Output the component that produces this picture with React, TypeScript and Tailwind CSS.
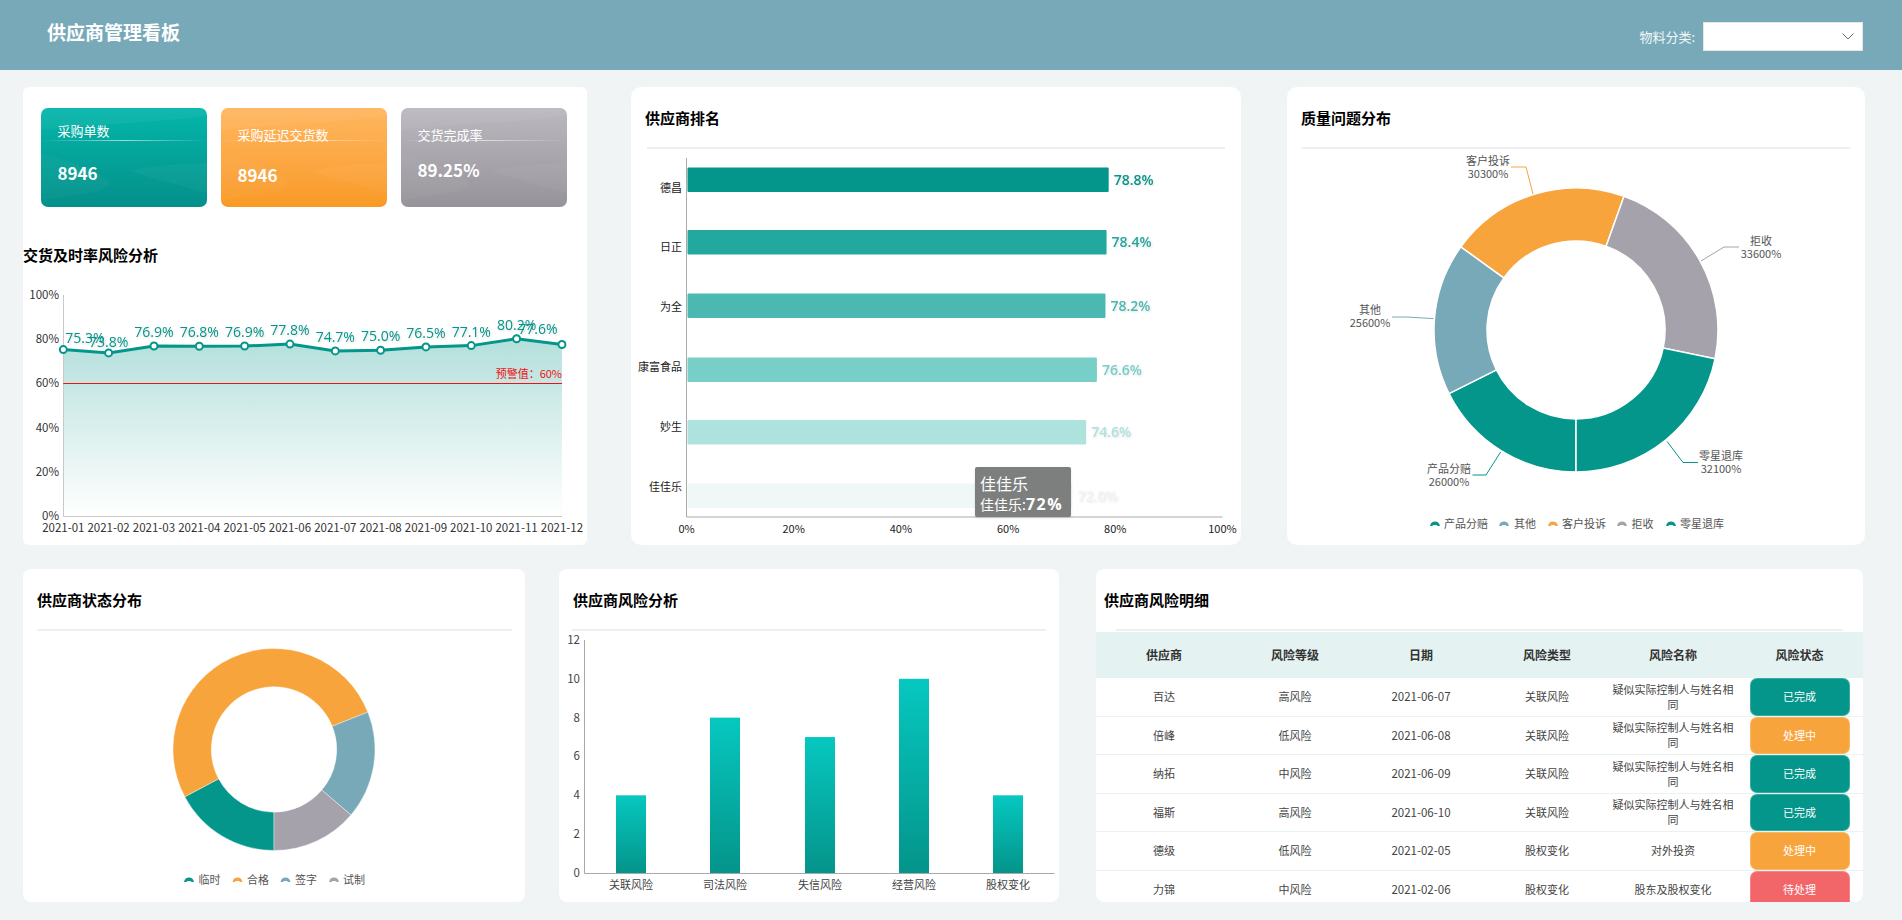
import React from "react";

const TEAL = "#04968a";
const ORANGE = "#f8a43c";
const BLUE = "#78a9b8";
const GRAY = "#a5a2ab";

function polar(cx: number, cy: number, r: number, deg: number) {
  const a = (deg * Math.PI) / 180;
  return [cx + r * Math.sin(a), cy - r * Math.cos(a)];
}

function arc(cx: number, cy: number, R: number, r: number, a0: number, a1: number) {
  const [x0, y0] = polar(cx, cy, R, a0);
  const [x1, y1] = polar(cx, cy, R, a1);
  const [x2, y2] = polar(cx, cy, r, a1);
  const [x3, y3] = polar(cx, cy, r, a0);
  const large = a1 - a0 > 180 ? 1 : 0;
  return `M${x0} ${y0}A${R} ${R} 0 ${large} 1 ${x1} ${y1}L${x2} ${y2}A${r} ${r} 0 ${large} 0 ${x3} ${y3}Z`;
}

function Donut({ cx, cy, R, r, items, stroke }: { cx: number; cy: number; R: number; r: number; items: { v: number; c: string }[]; stroke: number }) {
  const total = items.reduce((s, i) => s + i.v, 0);
  let a = 180;
  return (
    <g>
      {items.map((it, i) => {
        const next = a + (it.v / total) * 360;
        const d = arc(cx, cy, R, r, a, next);
        a = next;
        return <path key={i} d={d} fill={it.c} stroke="#fff" strokeWidth={stroke} />;
      })}
    </g>
  );
}

function LegendMark({ x, y, c }: { x: number; y: number; c: string }) {
  return <path transform={`translate(${x} ${y})`} d="M0 5C.6 2 2.6 .6 5 .6S9.4 2 10 5H7.600C7 3.600 3 3.600 2.400 5Z" fill={c} />;
}

function CardHead({ title, className = "" }: { title: string; className?: string }) {
  return <h2 className={`text-[15px] leading-[20px] font-bold text-black ${className}`}>{title}</h2>;
}

function Kpi({ title, value, grad, titleTop, valueTop }: { title: string; value: string; grad: string; titleTop: string; valueTop: string }) {
  return (
    <div className={`relative h-[99px] w-[166px] overflow-hidden rounded-[7px] text-white ${grad}`}>
      <svg className="absolute inset-0" width="166" height="99" viewBox="0 0 166 99">
        <path d="M0 22C40 17 110 15 166 8V0H0Z" fill="#fff" fillOpacity="0.05" />
        <path d="M0 46C30 53 62 64 68 75C68 85 30 88 0 92Z" fill="#fff" fillOpacity="0.03" />
        <path d="M166 55C130 56 102 59 90 63C110 70 140 78 166 85Z" fill="#fff" fillOpacity="0.035" />
      </svg>
      <div className="absolute left-0 right-0 top-[32px] h-px bg-gradient-to-r from-transparent via-white/60 to-transparent" />
      <div className={`relative pl-[16.500px] ${titleTop} text-[13px] leading-[18px]`}>{title}</div>
      <div className={`relative pl-[16.500px] ${valueTop} text-[17px] leading-[22px] font-bold`}>{value}</div>
    </div>
  );
}

const lineVals = [75.3, 73.8, 76.9, 76.8, 76.9, 77.8, 74.7, 75.0, 76.5, 77.1, 80.2, 77.6];
const lineX = (i: number) => 63.3 + i * 45.33;
const lineY = (v: number) => 516 - v * 2.21;
const OPEN = { fontFamily: "'Open Sans', sans-serif" };

function LineChart() {
  const pts = lineVals.map((v, i) => `${lineX(i)},${lineY(v)}`).join(" ");
  return (
    <svg className="block" width="564" height="275" viewBox="23 270 564 275">
      <defs>
        <linearGradient id="area" x1="0" y1="0" x2="0" y2="1">
          <stop offset="0" stopColor="#04968a" stopOpacity="0.3" />
          <stop offset="1" stopColor="#04968a" stopOpacity="0" />
        </linearGradient>
      </defs>
      <polygon points={`63.3,516 ${pts} ${lineX(11)},516`} fill="url(#area)" />
      <path d="M63.5 295V516.500H562" fill="none" stroke="#c9c9c9" />
      {[0, 20, 40, 60, 80, 100].map((v) => (
        <text key={v} x="59" y={516 - v * 2.21 + 4} textAnchor="end" fontSize="11.5" fill="#333">{v}%</text>
      ))}
      {lineVals.map((_, i) => (
        <text key={i} x={lineX(i)} y="532" textAnchor="middle" fontSize="11.5" fill="#333">{`2021-${String(i + 1).padStart(2, "0")}`}</text>
      ))}
      <line x1="63.3" x2="562" y1="383.5" y2="383.5" stroke="#f01010" />
      <text x="562" y="378" textAnchor="end" fontSize="11" fill="#f01010">预警值：60%</text>
      <polyline points={pts} fill="none" stroke={TEAL} strokeWidth="3" />
      {lineVals.map((v, i) => (
        <circle key={i} cx={lineX(i)} cy={lineY(v)} r="3.5" fill="#fff" stroke={TEAL} strokeWidth="2" />
      ))}
      <g className="[filter:drop-shadow(1px_1px_1px_rgba(0,0,0,0.15))]" style={OPEN} fontSize="14" fill={TEAL} textAnchor="middle">
        {lineVals.map((v, i) => {
          const x = i === 0 ? 85 : i === 11 ? 538 : lineX(i);
          const y = lineY(v) - (i === 0 ? 7 : i === 1 ? 6 : i === 11 ? 11 : 9);
          return <text key={i} x={x} y={y}>{v.toFixed(1)}%</text>;
        })}
      </g>
    </svg>
  );
}

const rank = [
  { n: "德昌", v: 78.8, c: "#04968a", top: 167.5, ly: 188 },
  { n: "日正", v: 78.4, c: "#22a89e", top: 230, ly: 247 },
  { n: "为全", v: 78.2, c: "#4bb9b1", top: 293.5, ly: 307 },
  { n: "康富食品", v: 76.6, c: "#78cfc8", top: 357.5, ly: 367 },
  { n: "妙生", v: 74.6, c: "#aee3dd", top: 420, ly: 427 },
  { n: "佳佳乐", v: 72.0, c: "#f0f8f7", top: 483.5, ly: 487 },
];

function RankChart() {
  return (
    <svg className="block" width="610" height="395" viewBox="631 150 610 395">
      <path d="M686.5 158V517H1222.5" fill="none" stroke="#aaa" />
      {rank.map((r) => {
        const w = r.v * 5.345;
        return (
          <g key={r.n}>
            <rect x="687.5" y={r.top} width={w} height="24.5" rx="1" fill={r.c} />
            <text x="682" y={r.ly + 4} textAnchor="end" fontSize="11" fill="#222">{r.n}</text>
            <text x={687.5 + w + 5} y={r.top + 17} style={OPEN} fontSize="14" fontWeight="600" fill={r.c} className="[filter:drop-shadow(1px_1px_1px_rgba(0,0,0,0.12))]">{r.v.toFixed(1)}%</text>
          </g>
        );
      })}
      {[0, 20, 40, 60, 80, 100].map((v) => (
        <text key={v} x={686.5 + v * 5.36} y="533" textAnchor="middle" fontSize="11" fill="#222">{v}%</text>
      ))}
    </svg>
  );
}

function QualityChart() {
  const labels = [
    { x: 1488, y1: 165, t: "客户投诉", v: "30300%", c: ORANGE, p: "1533,194 1526,167 1511,167" },
    { x: 1761, y1: 245, t: "拒收", v: "33600%", c: GRAY, p: "1701,261 1724,247 1739,247" },
    { x: 1370, y1: 314, t: "其他", v: "25600%", c: BLUE, p: "1433.6,318.6 1407,317 1392,317" },
    { x: 1721, y1: 460, t: "零星退库", v: "32100%", c: TEAL, p: "1667,441.4 1683,462.5 1698,462.5" },
    { x: 1449, y1: 473, t: "产品分赔", v: "26000%", c: TEAL, p: "1500.6,452 1486,475 1472.5,475" },
  ];
  const legend = [
    { ix: 1430, tx: 1444, t: "产品分赔", c: TEAL },
    { ix: 1499, tx: 1514, t: "其他", c: BLUE },
    { ix: 1548, tx: 1562, t: "客户投诉", c: ORANGE },
    { ix: 1617, tx: 1631.5, t: "拒收", c: GRAY },
    { ix: 1666, tx: 1680, t: "零星退库", c: TEAL },
  ];
  return (
    <svg className="block" width="578" height="395" viewBox="1287 150 578 395">
      <Donut cx={1576} cy={330} R={142} r={89} stroke={1.5} items={[
        { v: 26000, c: TEAL }, { v: 25600, c: BLUE }, { v: 30300, c: ORANGE }, { v: 33600, c: GRAY }, { v: 32100, c: TEAL },
      ]} />
      {labels.map((l) => (
        <g key={l.t}>
          <polyline points={l.p} fill="none" stroke={l.c} strokeWidth="1" />
          <text x={l.x} y={l.y1} textAnchor="middle" fontSize="11" fill="#555">{l.t}</text>
          <text x={l.x} y={l.y1 + 13} textAnchor="middle" fontSize="11" fill="#555">{l.v}</text>
        </g>
      ))}
      {legend.map((l) => (
        <g key={l.t}>
          <LegendMark x={l.ix} y={521} c={l.c} />
          <text x={l.tx} y="528" fontSize="11" fill="#555">{l.t}</text>
        </g>
      ))}
    </svg>
  );
}

function StatusChart() {
  const legend = [
    { ix: 184, tx: 198.5, t: "临时", c: TEAL },
    { ix: 232.5, tx: 247, t: "合格", c: ORANGE },
    { ix: 280.5, tx: 295, t: "签字", c: BLUE },
    { ix: 329, tx: 343, t: "试制", c: GRAY },
  ];
  return (
    <svg className="block" width="502" height="270" viewBox="23 632 502 270">
      <Donut cx={274} cy={749.5} R={101} r={62.7} stroke={0.4} items={[
        { v: 5, c: TEAL }, { v: 15, c: ORANGE }, { v: 5, c: BLUE }, { v: 4, c: GRAY },
      ]} />
      {legend.map((l) => (
        <g key={l.t}>
          <LegendMark x={l.ix} y={877} c={l.c} />
          <text x={l.tx} y="884" fontSize="11" fill="#555">{l.t}</text>
        </g>
      ))}
    </svg>
  );
}

const risk = [
  { t: "关联风险", v: 4, x: 631 },
  { t: "司法风险", v: 8, x: 725 },
  { t: "失信风险", v: 7, x: 820 },
  { t: "经营风险", v: 10, x: 914 },
  { t: "股权变化", v: 4, x: 1008 },
];

function RiskChart() {
  return (
    <svg className="block" width="500" height="270" viewBox="559 632 500 270">
      <defs>
        <linearGradient id="bar" x1="0" y1="0" x2="0" y2="1">
          <stop offset="0" stopColor="#06c8c0" />
          <stop offset="1" stopColor="#04948a" />
        </linearGradient>
      </defs>
      {risk.map((r) => {
        const h = r.v * 19.42;
        return (
          <g key={r.t}>
            <rect x={r.x - 15} y={873 - h} width="30" height={h} fill="url(#bar)" />
            <text x={r.x} y="889" textAnchor="middle" fontSize="11" fill="#444">{r.t}</text>
          </g>
        );
      })}
      <path d="M584.5 640V873.500H1054.500" fill="none" stroke="#aaa" />
      {[0, 2, 4, 6, 8, 10, 12].map((v) => (
        <text key={v} x="580" y={873 - v * 19.42 + 4} textAnchor="end" fontSize="11.5" fill="#444">{v}</text>
      ))}
    </svg>
  );
}

const NAME = "疑似实际控制人与姓名相同";
const rows = [
  ["百达", "高风险", "2021-06-07", "关联风险", NAME, "已完成"],
  ["倍峰", "低风险", "2021-06-08", "关联风险", NAME, "处理中"],
  ["纳拓", "中风险", "2021-06-09", "关联风险", NAME, "已完成"],
  ["福斯", "高风险", "2021-06-10", "关联风险", NAME, "已完成"],
  ["德级", "低风险", "2021-02-05", "股权变化", "对外投资", "处理中"],
  ["力锦", "中风险", "2021-02-06", "股权变化", "股东及股权变化", "待处理"],
];
const statusCls: Record<string, string> = {
  已完成: "bg-[#04968a]",
  处理中: "bg-[#f8a43c]",
  待处理: "bg-[#f2666a]",
};
const cols = "grid grid-cols-[136px_126px_126px_126px_126px_127px] text-center";

function RiskTable() {
  return (
    <div>
      <div className={`${cols} h-[46px] items-center bg-[#e4f2f1] text-[12px] font-bold text-[#333]`}>
        {["供应商", "风险等级", "日期", "风险类型", "风险名称", "风险状态"].map((h) => (
          <div key={h}>{h}</div>
        ))}
      </div>
      {rows.map((r) => (
        <div key={r[0]} className={`${cols} h-[38.5px] items-center border-b border-[#e8f3f2] text-[11px] leading-[15px] text-[#444]`}>
          {r.slice(0, 5).map((c, i) => (
            <div key={i} className={i === 2 ? "px-[2px] text-[11.5px]" : "px-[2px]"}>{c}</div>
          ))}
          <div className="flex h-full justify-center">
            <div className={`flex h-full w-[100px] items-center justify-center rounded-[7px] border border-white/20 text-white ${statusCls[r[5]]}`}>{r[5]}</div>
          </div>
        </div>
      ))}
    </div>
  );
}

export default function App() {
  return (
    <div className="h-[920px] w-[1902px] overflow-hidden bg-[#f0f4f5] font-['Noto_Sans_CJK_SC','Noto_Sans',sans-serif]">
      <header className="flex h-[70px] justify-between bg-[#78a9b8]">
        <h1 className="ml-[47px] mt-[20px] text-[19px] leading-[24px] font-bold text-white">供应商管理看板</h1>
        <div className="mr-[39px] mt-[22px] flex h-[29px] items-center gap-[8px]">
          <span className="text-[13px] text-[#f2f8fa]">物料分类:</span>
          <div className="flex h-[29px] w-[160px] items-center justify-end border border-[#e6e6e6] bg-white pr-[8px]">
            <svg width="12" height="7" viewBox="0 0 12 7"><path d="M.5 .5L6 6L11.500 .5" fill="none" stroke="#5d6b7a" strokeWidth="1" /></svg>
          </div>
        </div>
      </header>

      <div className="mt-[17px] flex pl-[23px]">
        <section className="h-[458px] w-[564px] rounded-[6px] bg-white">
          <div className="flex gap-[14px] pl-[18px] pt-[21px]">
            <Kpi title="采购单数" value="8946" titleTop="pt-[14px]" valueTop="pt-[22px]" grad="bg-gradient-to-b from-[#04b6aa] to-[#04908a]" />
            <Kpi title="采购延迟交货数" value="8946" titleTop="pt-[18px]" valueTop="pt-[20px]" grad="bg-gradient-to-b from-[#ffb65e] to-[#f99a24]" />
            <Kpi title="交货完成率" value="89.25%" titleTop="pt-[18px]" valueTop="pt-[15px]" grad="bg-gradient-to-b from-[#bbb8bf] to-[#96939a]" />
          </div>
          <CardHead title="交货及时率风险分析" className="mt-[38px] h-[25px]" />
          <LineChart />
        </section>

        <section className="relative ml-[44px] h-[458px] w-[610px] rounded-[10px] bg-white">
          <CardHead title="供应商排名" className="pl-[14px] pt-[21px]" />
          <div className="mx-[16px] mb-[1px] mt-[19px] h-[2px] bg-[#eeeff0]" />
          <RankChart />
          <div className="absolute left-[344px] top-[380px] h-[50px] w-[96px] rounded-[2px] bg-[#7d7f7e] pl-[5px] pt-[5px] text-white shadow-sm">
            <div className="text-[16px] leading-[22px]">佳佳乐</div>
            <div className="text-[14px] leading-[20px]">佳佳乐:<b className="font-['Open_Sans',sans-serif] text-[16px] tracking-[1.5px]">72%</b></div>
          </div>
        </section>

        <section className="ml-[46px] h-[458px] w-[578px] rounded-[10px] bg-white">
          <CardHead title="质量问题分布" className="pl-[14px] pt-[21px]" />
          <div className="mx-[15px] mb-[1px] mt-[19px] h-[2px] bg-[#eeeff0]" />
          <QualityChart />
        </section>
      </div>

      <div className="mt-[24px] flex pl-[23px]">
        <section className="h-[333px] w-[502px] rounded-[8px] bg-white">
          <CardHead title="供应商状态分布" className="pl-[14px] pt-[21px]" />
          <div className="ml-[14px] mr-[13px] mb-[1px] mt-[19px] h-[2px] bg-[#eeeff0]" />
          <StatusChart />
        </section>

        <section className="ml-[34px] h-[333px] w-[500px] rounded-[8px] bg-white">
          <CardHead title="供应商风险分析" className="pl-[14px] pt-[21px]" />
          <div className="mx-[13px] mb-[1px] mt-[19px] h-[2px] bg-[#eeeff0]" />
          <RiskChart />
        </section>

        <section className="ml-[37px] h-[333px] w-[767px] overflow-hidden rounded-[8px] bg-white">
          <CardHead title="供应商风险明细" className="pl-[8px] pt-[21px]" />
          <div className="mx-[20px] mb-[1px] mt-[19px] h-[2px] bg-[#eeeff0]" />
          <RiskTable />
        </section>
      </div>
    </div>
  );
}
